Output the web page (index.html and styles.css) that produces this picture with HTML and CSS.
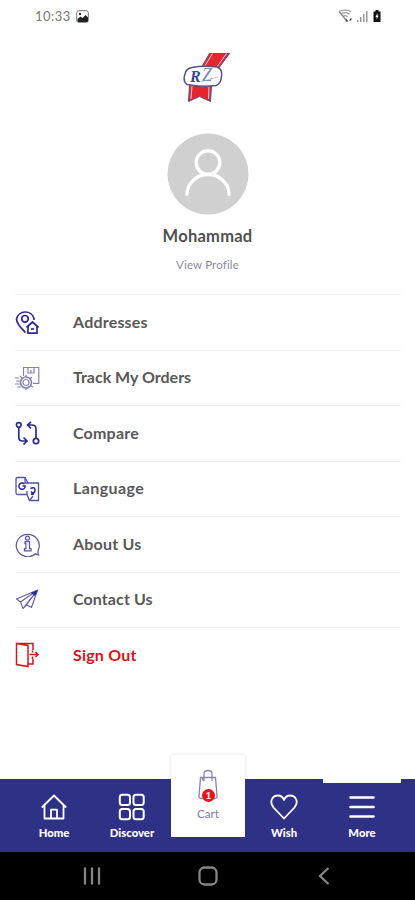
FILE: index.html
```html
<!DOCTYPE html>
<html lang="en">
<head>
<meta charset="utf-8">
<meta name="viewport" content="width=device-width, initial-scale=1">
<title>More</title>
<link rel="stylesheet" href="styles.css">
</head>
<body>
<div class="screen">
  <header class="status">
    <span class="time">10:33</span>
    <svg class="photo" width="13" height="13" viewBox="0 0 13 13"><rect x=".7" y=".7" width="11.6" height="11.6" rx="2" fill="#fff" stroke="#777" stroke-width="1"/><path d="M1.500 9l3-2.500 2 1.500 3-3 2.500 2.500V11q0 1-1 1H2.500Q1.500 12 1.500 11z" fill="#222"/><circle cx="4" cy="4" r="1.200" fill="#333"/></svg>
    <svg class="signals" width="45" height="16" viewBox="0 0 45 16">
      <g fill="none" stroke="#888" stroke-width="1.200"><path d="M1 3.500Q7 .5 13 3.500M2.500 6Q7 3.500 11.500 6M4.500 8.500Q7 7 9.500 8.500M1 3.500l7.500 9"/></g>
      <path d="M8 10.500l2.500 3h-3zM13.500 9.500v3h-2.500z" fill="#444"/>
      <g fill="#999"><path d="M19 12h1.500v2H19zM22 9h1.500v5H22zM25 6h1.500v8H25zM28 3h1.500v11H28z"/></g>
      <path d="M35.500 3.500h2V2h3v1.500h2V14h-7z" fill="#111"/><path d="M39.500 5L37.500 9h1.200v2.500l2-3.700h-1.200z" fill="#fff"/>
    </svg>
  </header>

  <section class="profile">
    <svg class="logo" width="50" height="52" viewBox="0 0 50 52">
      <path d="M26.500 1.500H46.500L35 17H17.500z" fill="#e5252d" stroke="#5a4b8c" stroke-width="1"/>
      <path d="M29.500 1.500L20 17M43.500 1.500L32.500 17" stroke="#f7d5dc" stroke-width="1" fill="none"/>
      <path d="M6.500 33H28.500L27.500 49.500L16.500 44.500L5.500 49.500z" fill="#e5252d" stroke="#5a4b8c" stroke-width="1"/>
      <path d="M9 34L8 47M26 34L25.500 47" stroke="#f7d5dc" stroke-width="1" fill="none"/>
      <path d="M9 15.500Q20 13.500 34 15Q39.500 17 38.500 24Q38 32 33 33.500Q17 35.500 4 32.500Q-.5 29 2 22Q3 16.500 9 15.500z" fill="#fff" stroke="#54528f" stroke-width="1.500"/>
      <text x="7" y="29.500" class="logo-r">R</text><text x="19" y="28.500" class="logo-z">Z</text>
      <path d="M18 30Q26 27 35 25" fill="none" stroke="#a2a9c5" stroke-width=".7"/>
    </svg>
    <svg class="avatar" width="82" height="82" viewBox="0 0 82 82"><circle cx="41" cy="41" r="40.500" fill="#d0d0d0"/><g fill="none" stroke="#fff" stroke-width="3.400" stroke-linecap="round"><circle cx="41" cy="29.500" r="11.800"/><path d="M20 61.500A21 20 0 0 1 62 61.500"/></g></svg>
    <h1 class="name">Mohammad</h1>
    <a class="view">View Profile</a>
  </section>

  <nav class="menu">
    <a class="row"><svg width="26" height="26" viewBox="0 0 26 26"><g fill="none" stroke="#2c2a91" stroke-width="1.700"><path d="M10.500 23.500C6 19 1.500 15 1.500 10A9 8.800 0 0 1 19 9.500V11"/><circle cx="10" cy="9.800" r="3.300"/><path d="M11.500 18.500L17.500 13l6 5.500M13 17.500v6.700h9v-6.700"/><path d="M16 20h3"/></g></svg><span class="t1">Addresses</span></a>
    <a class="row"><svg width="26" height="26" viewBox="0 0 26 26"><g fill="none" stroke="#8583b5" stroke-width="1.200"><path d="M8.500 11V2.500h15.300v15.800H18"/><path d="M13 2.500V8h6V2.500M16 5v3"/><circle cx="11" cy="17.500" r="5.500" stroke-width="1.600"/><circle cx="11" cy="17.500" r="3"/><path d="M0 13h4M1 16h4M0 19h5M2 22h4M11 10v2M11 23v2M17 12l-2 2M5 11l2 2M18 22l-2-1"/></g></svg><span class="t2">Track My Orders</span></a>
    <a class="row"><svg width="26" height="26" viewBox="0 -1 26 26"><g fill="none" stroke="#2c2a91" stroke-width="1.700"><circle cx="3.800" cy="4" r="2.300"/><path d="M3.800 6.300v10Q3.800 20 7.500 20H12M8.500 16.500l3.500 3.500-3.500 3.500"/><circle cx="21" cy="20" r="2.700"/><path d="M21 17.500V8Q21 4 17 4h-4.500M16 .8L12.500 4 16 7.500"/></g></svg><span class="t3">Compare</span></a>
    <a class="row"><svg width="26" height="26" viewBox="0 0 26 26"><g fill="none" stroke="#5452a2" stroke-width="1.300"><path d="M12.500 18.500H3Q1 18.500 1 16.500V3Q1 1.500 3 1.500H10L13 7h10.500v17.500H14.500L12 18.500V15"/><path d="M10 1.500V7h3M14.500 24.500L18 20"/></g><g fill="none" stroke="#2c2a91" stroke-width="1.500"><path d="M9.500 8A3.200 3.200 0 1 0 10 11.500V10H7.500M15.500 12.500Q19.500 10.500 20 13.500T16 18.500M16 15.500l3 3"/></g></svg><span class="t4">Language</span></a>
    <a class="row"><svg width="26" height="26" viewBox="0 0 26 26"><g fill="none" stroke="#5b59a5" stroke-width="1.250"><path d="M20.500 22.800A11.500 11.200 0 1 1 23.500 18.500Q22.500 21 23.500 24z"/><circle cx="12.500" cy="7" r="2"/><path d="M10 10.500h4.500v7H16v2.300H9.500v-2.300H11v-5h-1z"/></g></svg><span class="t5">About Us</span></a>
    <a class="row"><svg width="26" height="26" viewBox="0 0 26 26"><g fill="none" stroke="#6462a6" stroke-width="1.150" stroke-linejoin="round"><path d="M22.500 3L1.500 12l4 3zM22.500 3L5.500 15l2.500 6.500zM22.500 3L8 21.500l3-3zM22.500 3L11 17.500l5.500 3z"/></g><path d="M16 6l7-3-3 6z" fill="#2c2a91"/></svg><span class="t6">Contact Us</span></a>
    <a class="row out"><svg width="26" height="26" viewBox="0 0 26 26"><g fill="none" stroke="#d8141c" stroke-width="1.500"><path d="M1.500 1.500L13 3.500v21L1.500 22.500zM1.500 1.500H18V8M13 22h5v-5"/><path d="M14.500 12.500H23M20.500 10l2.500 2.500-2.500 2.500M17.500 8.500v2M17.500 14.500v2.500"/></g></svg><span class="t7">Sign Out</span></a>
  </nav>

  <footer class="tabs">
    <a class="tab"><svg width="28" height="28" viewBox="0 0 28 28"><path d="M1.800 14.500L14 2.500l12.200 12M4.500 12.500v13h19v-13M11 25.500v-8.800h6v8.800" fill="none" stroke="#fff" stroke-width="1.800" stroke-linejoin="round"/></svg><span>Home</span></a>
    <a class="tab"><svg width="28" height="28" viewBox="0 0 28 28"><g fill="none" stroke="#fff" stroke-width="2"><rect x="1.800" y="1.800" width="10.200" height="10.200" rx="2.500"/><rect x="15.500" y="1.800" width="10.200" height="10.200" rx="2.500"/><rect x="1.800" y="16" width="10.200" height="10.200" rx="2.500"/><rect x="15.500" y="16" width="10.200" height="10.200" rx="2.500"/></g></svg><span>Discover</span></a>
    <a class="cart"><span class="bag"><svg width="24" height="32" viewBox="0 0 24 32"><g fill="none" stroke="#8886ad" stroke-width="1.300"><path d="M4.500 8.500h15L21 27q0 2.500-2.500 2.500h-13Q3 29.500 3 27zM8 12V5q0-3.500 4-3.500T16 5v7M6 8.500l1.500 3.500"/></g></svg><b class="count">1</b></span><span class="cart-label">Cart</span></a>
    <a class="tab"><svg width="28" height="28" viewBox="0 0 28 28"><path d="M14 25.500L3.500 14.500C-1.500 8 3 2.500 7.800 2.500 11 2.500 13 4.500 14 7c1-2.500 3-4.500 6.200-4.500C25 2.500 29.500 8 24.500 14.500z" fill="none" stroke="#fff" stroke-width="1.800" stroke-linejoin="round"/></svg><span>Wish</span></a>
    <a class="tab active"><svg width="28" height="28" viewBox="0 0 28 28"><path d="M2.500 4.500h23M2.500 14h23M2.500 23.500h23" stroke="#fff" stroke-width="2.600" stroke-linecap="round"/></svg><span>More</span></a>
  </footer>

  <div class="system">
    <svg width="20" height="20" viewBox="0 0 20 20"><path d="M3 1.500v17M10 1.500v17M17 1.500v17" stroke="#858585" stroke-width="2.300"/></svg>
    <svg width="20" height="20" viewBox="0 0 20 20"><rect x="1.500" y="1.500" width="17" height="17" rx="5" fill="none" stroke="#858585" stroke-width="2.300"/></svg>
    <svg width="20" height="20" viewBox="0 0 20 20"><path d="M14.500 2L6 10l8.500 8" fill="none" stroke="#858585" stroke-width="2.300"/></svg>
  </div>
</div>
</body>
</html>
```
FILE: styles.css
```css
* { box-sizing: border-box; }
body { margin: 0; background: #fff; font-family: Lato, "Noto Sans", sans-serif; }
svg { display: block; flex: none; }
.screen { width: 415px; height: 900px; display: flex; flex-direction: column; overflow: hidden; }

.status { height: 34px; display: flex; align-items: center; padding: 0 32px 2px 35px; }
.time { font-size: 13px; line-height: 16px; color: #777; width: 41px; letter-spacing: .5px; }
.signals { margin-left: auto; }

.profile { height: 260px; display: flex; flex-direction: column; align-items: center; padding-top: 18px; }
.logo-r { font: italic bold 16px "Liberation Serif", serif; fill: #37479a; }
.logo-z { font: italic 18px "Liberation Serif", serif; fill: #7c87ad; }
.avatar { margin-top: 29px; }
.name { margin: 9px 0 0; font-size: 16.500px; line-height: 24px; font-weight: 700; color: #505050; letter-spacing: .25px; }
.view { margin-top: 9px; font-size: 11.500px; line-height: 16px; color: #8a88a8; letter-spacing: .15px; }

.menu { padding: 0 14px 0 15px; }
.row { height: 55.500px; border-top: 1.500px solid #f1f1f1; display: flex; align-items: center; gap: 32px; font-size: 16px; font-weight: 700; color: #585858; }
.row span { white-space: nowrap; line-height: 20px; padding-bottom: 1px; letter-spacing: .2px; }
.row .t2 { letter-spacing: 0; }
.row .t4 { letter-spacing: .4px; }
.row .t6 { letter-spacing: .1px; }
.out { color: #d8141c; }

.tabs { height: 73px; margin-top: auto; background: #2f3187; display: grid; grid-template-columns: 93px 78px 74px 78px 78px; }
.tab { display: flex; flex-direction: column; align-items: center; padding-top: 14px; color: #fff; font-size: 11.300px; font-weight: 900; line-height: 14px; gap: 5px; }
.tab:first-child { padding-left: 15px; }
.active { border-top: 4px solid #fff; padding-top: 10px; }
.cart { height: 82px; margin-top: -24px; background: #fff; display: flex; flex-direction: column; align-items: center; padding-top: 14px; box-shadow: 0 0 3px rgba(0, 0, 0, .14); }
.bag { position: relative; }
.count { position: absolute; left: 6px; top: 20px; width: 13px; height: 13px; border-radius: 50%; background: #ed111b; color: #fff; font-size: 10px; line-height: 13px; text-align: center; }
.cart-label { margin-top: 6px; color: #8583a5; font-size: 11.500px; line-height: 14px; font-weight: 500; }

.system { height: 48px; background: #000; display: flex; align-items: center; justify-content: space-between; padding: 0 81px 0 82px; }
```
